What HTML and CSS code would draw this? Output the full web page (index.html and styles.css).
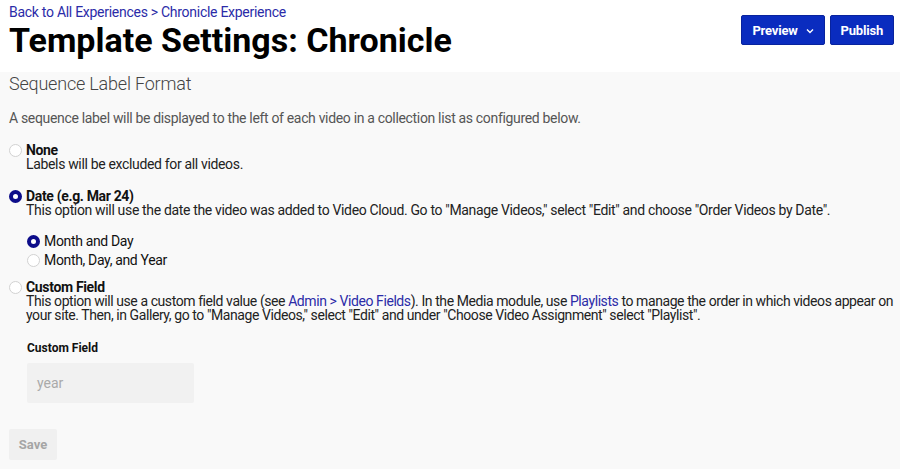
FILE: index.html
```html
<!DOCTYPE html>
<html>
<head>
<meta charset="utf-8">
<link rel="stylesheet" href="styles.css">
</head>
<body>
<header class="top">
  <div class="heading">
    <a class="crumb" href="#">Back to All Experiences &gt; Chronicle Experience</a>
    <h1 class="title">Template Settings: Chronicle</h1>
  </div>
  <div class="actions">
    <button class="btn preview"><span>Preview</span><svg class="chev" width="8" height="6" viewBox="0 0 8 6"><path d="M1 1.5 L4 4.5 L7 1.5" fill="none" stroke="#fff" stroke-width="1.4"/></svg></button>
    <button class="btn">Publish</button>
  </div>
</header>
<main class="panel">
  <h2 class="section-title">Sequence Label Format</h2>
  <p class="intro">A sequence label will be displayed to the left of each video in a collection list as configured below.</p>

  <div class="option">
    <span class="radio"></span>
    <div class="opt-body">
      <div class="opt-label">None</div>
      <div class="opt-desc">Labels will be excluded for all videos.</div>
    </div>
  </div>

  <div class="option">
    <span class="radio on"></span>
    <div class="opt-body">
      <div class="opt-label">Date (e.g. Mar 24)</div>
      <div class="opt-desc">This option will use the date the video was added to Video Cloud. Go to "Manage Videos," select "Edit" and choose "Order Videos by Date".</div>
    </div>
  </div>

  <div class="suboptions">
    <div class="sub"><span class="radio on"></span><span>Month and Day</span></div>
    <div class="sub"><span class="radio"></span><span>Month, Day, and Year</span></div>
  </div>

  <div class="option after-sub">
    <span class="radio"></span>
    <div class="opt-body">
      <div class="opt-label">Custom Field</div>
      <div class="opt-desc tight">This option will use a custom field value (see <a href="#">Admin &gt; Video Fields</a>). In the Media module, use <a href="#">Playlists</a> to manage the order in which videos appear on your site. Then, in Gallery, go to "Manage Videos," select "Edit" and under "Choose Video Assignment" select "Playlist".</div>
    </div>
  </div>

  <div class="field">
    <label class="field-label">Custom Field</label>
    <div class="input">year</div>
  </div>

  <button class="save">Save</button>
</main>
</body>
</html>
```

FILE: styles.css
```css
* { box-sizing: border-box; }
html, body { margin: 0; padding: 0; }
body {
  font-family: "Roboto", "Liberation Sans", sans-serif;
  color: #111;
  background: #fff;
  width: 900px;
  height: 469px;
  overflow: hidden;
}
a { color: #2b2ba8; text-decoration: none; }

.top {
  display: flex;
  justify-content: space-between;
  align-items: flex-start;
  padding: 4px 6px 0 9px;
  height: 72px;
  background: #fff;
}
.crumb { font-size: 14px; line-height: 16px; display: block; letter-spacing: -0.28px; }
.title {
  margin: 1px 0 0 0;
  font-size: 34px;
  line-height: 38px;
  font-weight: 700;
  color: #000;
}
.actions { display: flex; gap: 5px; margin-top: 11px; }
.btn {
  height: 30px;
  background: #0a2cbf;
  color: #fff;
  border: 1px solid #08239e;
  border-radius: 2px;
  font-family: inherit;
  font-weight: 700;
  font-size: 13px;
  letter-spacing: -0.2px;
  padding: 0 10px;
  display: flex;
  align-items: center;
  gap: 8px;
}
.btn.preview { padding: 0 10px 0 10px; }
.chev { flex: none; margin-top: 1px; }

.panel {
  background: #f9f9f9;
  padding: 1px 3px 0 9px;
  height: 397px;
}
.section-title {
  margin: 0;
  font-size: 18px;
  line-height: 22px;
  font-weight: 300;
  color: #444;
  letter-spacing: -0.2px;
}
.intro {
  margin: 14px 0 0 0;
  font-size: 14px;
  line-height: 18px;
  color: #555;
  letter-spacing: -0.33px;
}
.option {
  display: flex;
  align-items: flex-start;
  gap: 4px;
  font-size: 14px;
  line-height: 14px;
  letter-spacing: -0.34px;
  margin-top: 16px;
}
.option + .option { margin-top: 18px; }
.option.after-sub { margin-top: 13px; }
.radio {
  width: 13px;
  height: 13px;
  border-radius: 50%;
  border: 1px solid #d2d2d2;
  background: #fff;
  flex: none;
  margin-top: 1px;
  display: inline-block;
}
.radio.on { border: 4px solid #0d0d8a; }
.opt-label { font-weight: 700; color: #111; }
.opt-desc { color: #222; }
.opt-desc.tight { letter-spacing: -0.42px; }

.suboptions {
  margin: 17px 0 0 18px;
  display: flex;
  flex-direction: column;
  gap: 5px;
  font-size: 14px;
  line-height: 14px;
  letter-spacing: -0.34px;
}
.sub { display: flex; align-items: center; gap: 4px; }
.sub .radio { margin-top: 0; }

.field { margin: 19px 0 0 18px; }
.field-label { display: block; font-size: 12px; font-weight: 700; line-height: 14px; }
.input {
  margin-top: 8px;
  width: 167px;
  height: 40px;
  background: #f1f1f1;
  border-radius: 2px;
  color: #aaa;
  font-size: 14px;
  line-height: 40px;
  padding-left: 10px;
}
.save {
  margin-top: 26px;
  width: 48px;
  height: 31px;
  background: #f0f0f0;
  border: none;
  border-radius: 2px;
  color: #a5a5a5;
  font-family: inherit;
  font-weight: 700;
  font-size: 13px;
}
```
